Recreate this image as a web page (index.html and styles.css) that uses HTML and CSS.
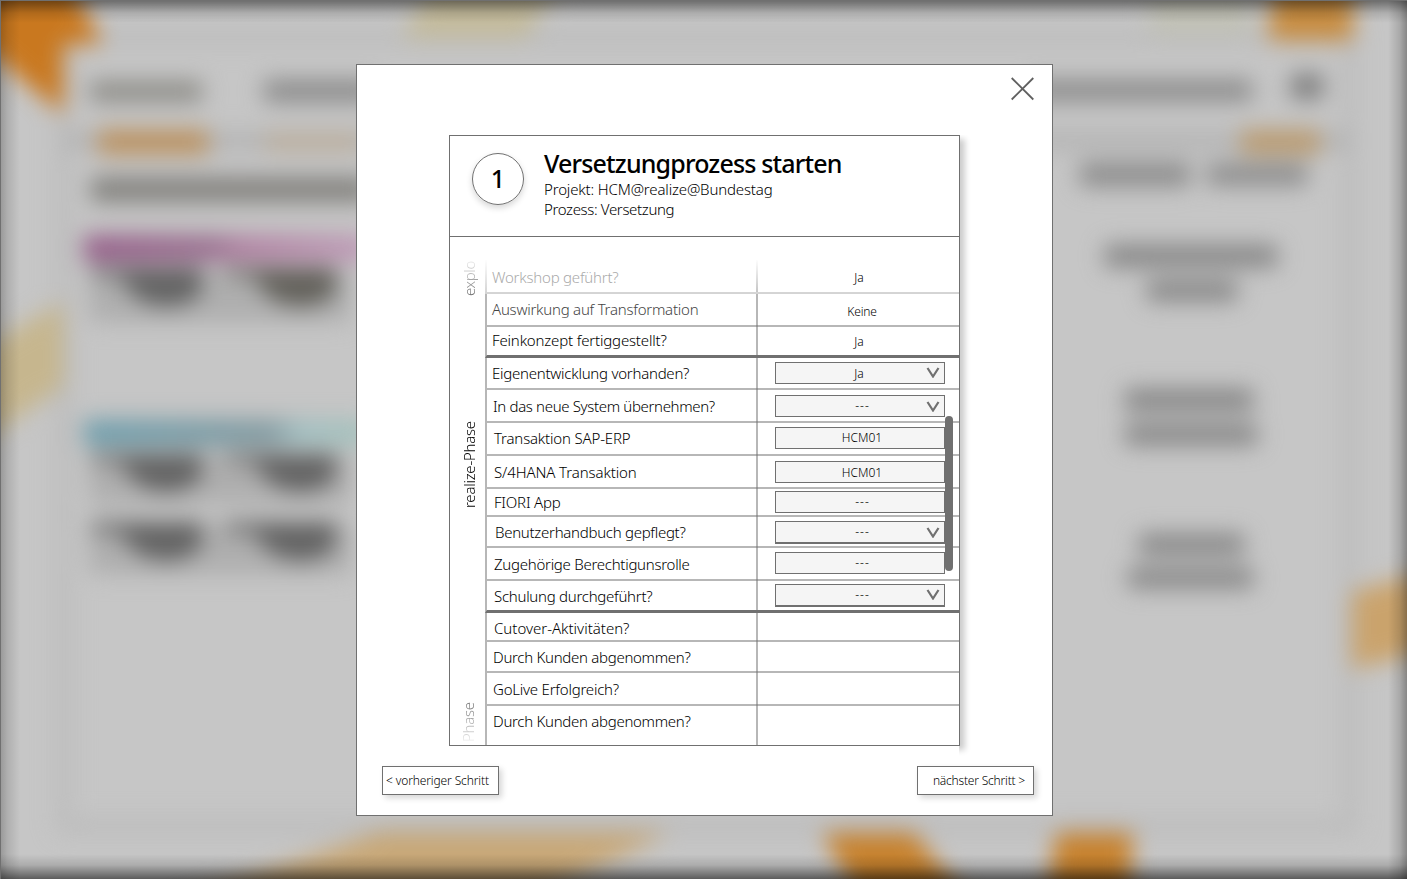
FILE: index.html
```html
<!DOCTYPE html>
<html lang="de">
<head>
<meta charset="utf-8">
<title>Versetzungprozess starten</title>
<link rel="stylesheet" href="styles.css">
</head>
<body>
<svg class="backdrop" viewBox="0 0 1407 879" aria-hidden="true">
  <defs>
    <filter id="soft" x="-10%" y="-10%" width="120%" height="120%" color-interpolation-filters="sRGB"><feGaussianBlur stdDeviation="10.500"/></filter>
    <filter id="softer" x="-20%" y="-20%" width="140%" height="140%" color-interpolation-filters="sRGB"><feGaussianBlur stdDeviation="3.500"/></filter>
    <linearGradient id="pink" x1="0" x2="1"><stop offset="0" stop-color="#955d89"/><stop offset=".45" stop-color="#9a6f90"/><stop offset=".55" stop-color="#b182a3"/><stop offset="1" stop-color="#be9cb7"/></linearGradient>
    <linearGradient id="teal" x1="0" x2="1"><stop offset="0" stop-color="#6d9ead"/><stop offset=".65" stop-color="#8099a0"/><stop offset=".75" stop-color="#a0bec0"/><stop offset="1" stop-color="#a6c2bc"/></linearGradient>
  </defs>
  <rect width="1407" height="879" fill="#c6c6c6"/>
  <g filter="url(#softer)"><g filter="url(#soft)">
    <path d="M64 38H1350V826H64Z" fill="none" stroke="#bbb" stroke-width="14"/>
    <path d="M64 141H1350" stroke="#b3b3b3" stroke-width="18"/>
    <path d="M-30-40H60L102 44H63V114L-30 36Z" fill="#c9781f"/>
    <path d="M445-40H575L525 38H402Z" fill="#c4bb9c"/>
    <path d="M1150-10H1250V34H1150Z" fill="#c2c2b6"/>
    <path d="M1276-30H1353V40H1268Z" fill="#c78c40"/>
    <path d="M-30 355L63 302V386L-30 450Z" fill="#c6b68e"/>
    <path d="M1352 592L1440 568V648L1352 669Z" fill="#caa36c"/>
    <path d="M170 905L380 832H670L520 905Z" fill="#c8a878"/>
    <path d="M822 833H914L978 915H868Z" fill="#c7822e"/>
    <path d="M1056 833H1133L1128 915H1045Z" fill="#c7822e"/>
    <path d="M98 130H208V154H98Z" fill="#b98f5c"/>
    <path d="M265 133H360V151H265Z" fill="#b8ab99"/>
    <path d="M1241 130H1320V154H1241Z" fill="#b8986c"/>
    <g fill="#8a8a8a">
      <path d="M90 81H202V102H90Z" fill="#8d8c87"/>
      <path d="M264 80H375V102H264Z"/>
      <path d="M1030 80H1252V101H1030Z"/>
      <path d="M1291 74H1323V99H1291Z" fill="#7c7c7c"/>
      <path d="M1080 163H1190V186H1080ZM1207 164H1307V185H1207Z"/>
    </g>
    <path d="M91 177H370V202H91Z" fill="#82817d"/>
    <path d="M84 235H370V262H84Z" fill="url(#pink)"/>
    <path d="M84 420H370V446H84Z" fill="url(#teal)"/>
    <path d="M90 272H350V322H90ZM90 456H350V504H90ZM90 524H350V574H90Z" fill="#aeaeae"/>
    <g fill="#626262">
      <path d="M92 268H202V292Q182 314 143 302Q126 290 119 276H92Z"/>
      <path d="M226 268H336V292Q316 314 277 302Q260 290 252 276H226Z" fill="#62605a"/>
      <path d="M92 454H202V476Q182 500 143 487Q126 475 119 462H92Z"/>
      <path d="M226 454H336V476Q316 500 277 487Q260 475 252 462H226Z"/>
      <path d="M92 522H202V545Q182 569 143 556Q126 545 119 532H92Z"/>
      <path d="M226 522H336V545Q316 569 277 556Q260 545 252 532H226Z"/>
    </g>
    <g fill="#858585">
      <path d="M1105 245H1277V267H1105ZM1147 280H1237V301H1147Z"/>
      <path d="M1125 389H1253V411H1125ZM1125 424H1257V445H1125Z"/>
      <path d="M1139 534H1244V555H1139ZM1128 568H1253V588H1128Z"/>
    </g>
  </g></g>
</svg>
<div class="vignette"></div>

<main class="dialog">
  <button class="close" aria-label="Schließen"><svg width="24" height="24" viewBox="0 0 24 24"><path d="M.7 1L22.300 22.500M22.300 1L.7 22.500"/></svg></button>

  <section class="card">
    <header class="head">
      <div class="step">1</div>
      <div class="intro">
        <h1>Versetzungprozess starten</h1>
        <p class="project">Projekt: HCM@realize@Bundestag</p>
        <p class="process">Prozess: Versetzung</p>
      </div>
    </header>
    <div class="body">
      <div class="phases">
        <span class="phase explore">explo</span>
        <span class="phase realize">realize-Phase</span>
        <span class="phase last">Phase</span>
      </div>
      <div class="rows">
        <div class="row"><span class="label">Workshop geführt?</span><div class="cell"><span class="plain">Ja</span></div></div>
        <div class="row"><span class="label">Auswirkung auf Transformation</span><div class="cell"><span class="plain keine">Keine</span></div></div>
        <div class="row"><span class="label">Feinkonzept fertiggestellt?</span><div class="cell"><span class="plain">Ja</span></div></div>
        <div class="row"><span class="label">Eigenentwicklung vorhanden?</span><div class="cell"><div class="field ja">Ja<svg class="chev" viewBox="0 0 14 11"><path d="M1.500 1L7 9.500L12.500 1"/></svg></div></div></div>
        <div class="row"><span class="label">In das neue System übernehmen?</span><div class="cell"><div class="field empty">---<svg class="chev low-chev" viewBox="0 0 14 11"><path d="M1.500 1L7 9.500L12.500 1"/></svg></div></div></div>
        <div class="row"><span class="label">Transaktion SAP-ERP</span><div class="cell"><div class="field">HCM01</div></div></div>
        <div class="row"><span class="label">S/4HANA Transaktion</span><div class="cell"><div class="field low">HCM01</div></div></div>
        <div class="row"><span class="label">FIORI App</span><div class="cell"><div class="field empty">---</div></div></div>
        <div class="row"><span class="label">Benutzerhandbuch gepflegt?</span><div class="cell"><div class="field empty strong">---<svg class="chev low-chev" viewBox="0 0 14 11"><path d="M1.500 1L7 9.500L12.500 1"/></svg></div></div></div>
        <div class="row"><span class="label">Zugehörige Berechtigunsrolle</span><div class="cell"><div class="field empty">---</div></div></div>
        <div class="row"><span class="label">Schulung durchgeführt?</span><div class="cell"><div class="field empty strong">---<svg class="chev" viewBox="0 0 14 11"><path d="M1.500 1L7 9.500L12.500 1"/></svg></div></div></div>
        <div class="row"><span class="label">Cutover-Aktivitäten?</span><div class="cell"></div></div>
        <div class="row"><span class="label">Durch Kunden abgenommen?</span><div class="cell"></div></div>
        <div class="row"><span class="label">GoLive Erfolgreich?</span><div class="cell"></div></div>
        <div class="row"><span class="label">Durch Kunden abgenommen?</span><div class="cell"></div></div>
        <div class="scrollbar"></div>
      </div>
    </div>
  </section>

  <footer class="actions">
    <button class="btn prev">&lt; vorheriger Schritt</button>
    <button class="btn next">nächster Schritt &gt;</button>
  </footer>
</main>
</body>
</html>
```

FILE: styles.css
```css
* { box-sizing: border-box; }
body {
  margin: 0;
  width: 1407px;
  height: 879px;
  padding: 64px 0 0 356px;
  overflow: hidden;
  font-family: "Noto Sans", "Open Sans", sans-serif;
  font-weight: 350;
  color: #000;
}
h1, p { margin: 0; }
button { font: inherit; color: inherit; padding: 0; background: none; border: 0; }

.backdrop { position: absolute; inset: 0; width: 1407px; height: 879px; }
.vignette {
  position: absolute;
  inset: 0;
  border: solid #707070;
  border-width: 1px 0 0 1px;
  background:
    linear-gradient(to bottom, rgba(0,0,0,.44), rgba(0,0,0,.31) 5px, rgba(0,0,0,.12) 12px, transparent 22px),
    linear-gradient(to top, rgba(0,0,0,.54), rgba(0,0,0,.36) 6px, rgba(0,0,0,.13) 14px, transparent 25px),
    linear-gradient(to right, rgba(0,0,0,.22), rgba(0,0,0,.11) 7px, transparent 19px),
    linear-gradient(to left, rgba(0,0,0,.32), rgba(0,0,0,.15) 7px, transparent 19px);
}

.dialog {
  position: relative;
  width: 697px;
  height: 752px;
  background: #fff;
  border: 1px solid #707070;
  display: flex;
  flex-direction: column;
}
.close { align-self: flex-end; width: 24px; height: 24px; margin: 12px 17px 0 0; }
.close svg { display: block; }
.close path { fill: none; stroke: #606060; stroke-width: 1.8; }

.card {
  width: 511px;
  height: 611px;
  margin: 34px 0 0 92px;
  border: 1px solid #707070;
  background: #fff;
  box-shadow: 5px 4px 6px rgba(0,0,0,.2);
  clip-path: polygon(0 0, 530px 0, 530px 625px, 510px 625px, 510px 611px, 0 611px);
  display: flex;
  flex-direction: column;
  flex: none;
}
.head { display: flex; height: 101px; border-bottom: 1px solid #707070; }
.step {
  width: 52px;
  height: 52px;
  margin: 17px 0 0 22px;
  border: 1px solid #707070;
  border-radius: 50%;
  box-shadow: 0 3px 6px rgba(0,0,0,.16);
  text-align: center;
  font-size: 25px;
  font-weight: 500;
  line-height: 49px;
}
.intro { margin: 11px 0 0 20px; white-space: nowrap; }
h1 { font-size: 25px; font-weight: 550; line-height: 32px; letter-spacing: -.84px; }
.intro p { font-size: 15px; line-height: 20px; letter-spacing: -.15px; }
.intro .process { letter-spacing: -.35px; }

.body { display: flex; height: 508px; }
.phases { width: 35px; height: 508px; padding-top: 23px; display: flex; flex-direction: column; flex: none; }
.phase {
  writing-mode: vertical-rl;
  transform: rotate(180deg);
  font-size: 15px;
  line-height: 20px;
  white-space: nowrap;
  width: 20px;
  margin-left: 9px;
  flex: none;
}
.explore { height: 36px; letter-spacing: -.4px; color: transparent; background: linear-gradient(to top, #eee, #666); background-clip: text; }
.realize { height: 90px; margin-top: 122px; letter-spacing: -.25px; }
.last { height: 42px; margin-top: 192px; margin-left: 8px; letter-spacing: -.3px; color: transparent; background: linear-gradient(to top, #666, #eee); background-clip: text; }

.rows { position: relative; width: 474px; padding-top: 23px; }
.row {
  --line: rgba(112,112,112,.5);
  display: flex;
  height: var(--h);
  border-bottom: var(--b, 2px) solid var(--line);
  border-left: 2px solid rgba(112,112,112,.5);
  white-space: nowrap;
}
.label { width: 269px; padding: var(--lt) 0 0 var(--lx, 5px); font-size: 15px; line-height: 20px; letter-spacing: var(--ls, -.22px); }
.cell { width: 203px; height: calc(100% + var(--b, 2px)); border-left: 2px solid rgba(112,112,112,.5); padding: var(--ft) 0 0 17px; }
.plain { display: block; width: 168px; text-align: center; font-size: 12px; line-height: 16px; }
.keine { width: 170px; padding-left: 4px; letter-spacing: -.2px; }
.field {
  position: relative;
  width: 170px;
  height: 22px;
  border: 1px solid #707070;
  background: #f5f5f5;
  text-align: center;
  padding-left: 4px;
  font-size: 12px;
  line-height: 19px;
}
.field.empty { letter-spacing: 1px; padding-left: 5px; }
.low { line-height: 21px; }
.ja { padding: 0 2px 0 0; line-height: 21px; }
.strong { height: 23px; border-bottom-width: 2px; }
.chev { position: absolute; right: 4px; top: 4px; width: 14px; height: 11px; }
.low-chev { top: 5px; }
.chev path { fill: none; stroke: #707070; stroke-width: 2.2; }

.row:nth-child(1) { --h: 34px; --lt: 7px; --ft: 10px; --line: #dadada; border-image: linear-gradient(#fff, #d4d4d4) 1; }
.row:nth-child(1) .label { color: #aaa; }
.row:nth-child(1) .cell { height: 32px; border-image: linear-gradient(#fff, #c4c4c4) 1; }
.row:nth-child(2) { --h: 33px; --lt: 5px; --ft: 10px; --ls: -.24px; }
.row:nth-child(2) .label { color: #444; }
.row:nth-child(3) { --h: 31px; --lt: 3px; --ft: 7px; --b: 3px; --line: #707070; --ls: -.17px; }
.row:nth-child(4) { --h: 32px; --lt: 5px; --ft: 4px; --ls: -.25px; }
.row:nth-child(5) { --h: 33px; --lt: 6px; --ft: 5px; --lx: 6px; --ls: -.34px; }
.row:nth-child(6) { --h: 33px; --lt: 5px; --ft: 4px; --lx: 7px; --ls: -.17px; }
.row:nth-child(7) { --h: 33px; --lt: 6px; --ft: 5px; --lx: 7px; --ls: -.1px; }
.row:nth-child(8) { --h: 28px; --lt: 3px; --ft: 2px; --lx: 7px; }
.row:nth-child(9) { --h: 31px; --lt: 5px; --ft: 4px; --lx: 8px; --ls: -.28px; }
.row:nth-child(10) { --h: 33px; --lt: 6px; --ft: 4px; --lx: 7px; --ls: -.27px; }
.row:nth-child(11) { --h: 32px; --lt: 5px; --ft: 3px; --b: 3px; --lx: 7px; --line: #707070; --ls: -.27px; }
.row:nth-child(12) { --h: 29px; --lt: 5px; --lx: 7px; --ls: 0px; }
.row:nth-child(13) { --h: 31px; --lt: 5px; --lx: 6px; --ls: -.29px; }
.row:nth-child(14) { --h: 33px; --lt: 6px; --lx: 6px; }
.row:nth-child(15) { --h: 39px; --lt: 5px; --lx: 6px; --b: 0px; --ls: -.29px; }

.scrollbar { position: absolute; left: 460px; top: 179px; width: 8px; height: 155px; border-radius: 4px; background: #707070; }

.actions { display: flex; justify-content: space-between; margin: 20px 18px 0 25px; }
.btn {
  width: 117px;
  height: 29px;
  border: 1px solid #707070;
  background: #fff;
  box-shadow: 3px 3px 6px rgba(0,0,0,.16);
  font-size: 12px;
  line-height: 26px;
  white-space: nowrap;
}
.prev { text-align: left; padding: 0 0 0 3px; letter-spacing: -.13px; }
.next { text-align: right; padding: 0 8px 0 0; letter-spacing: -.2px; }
```
